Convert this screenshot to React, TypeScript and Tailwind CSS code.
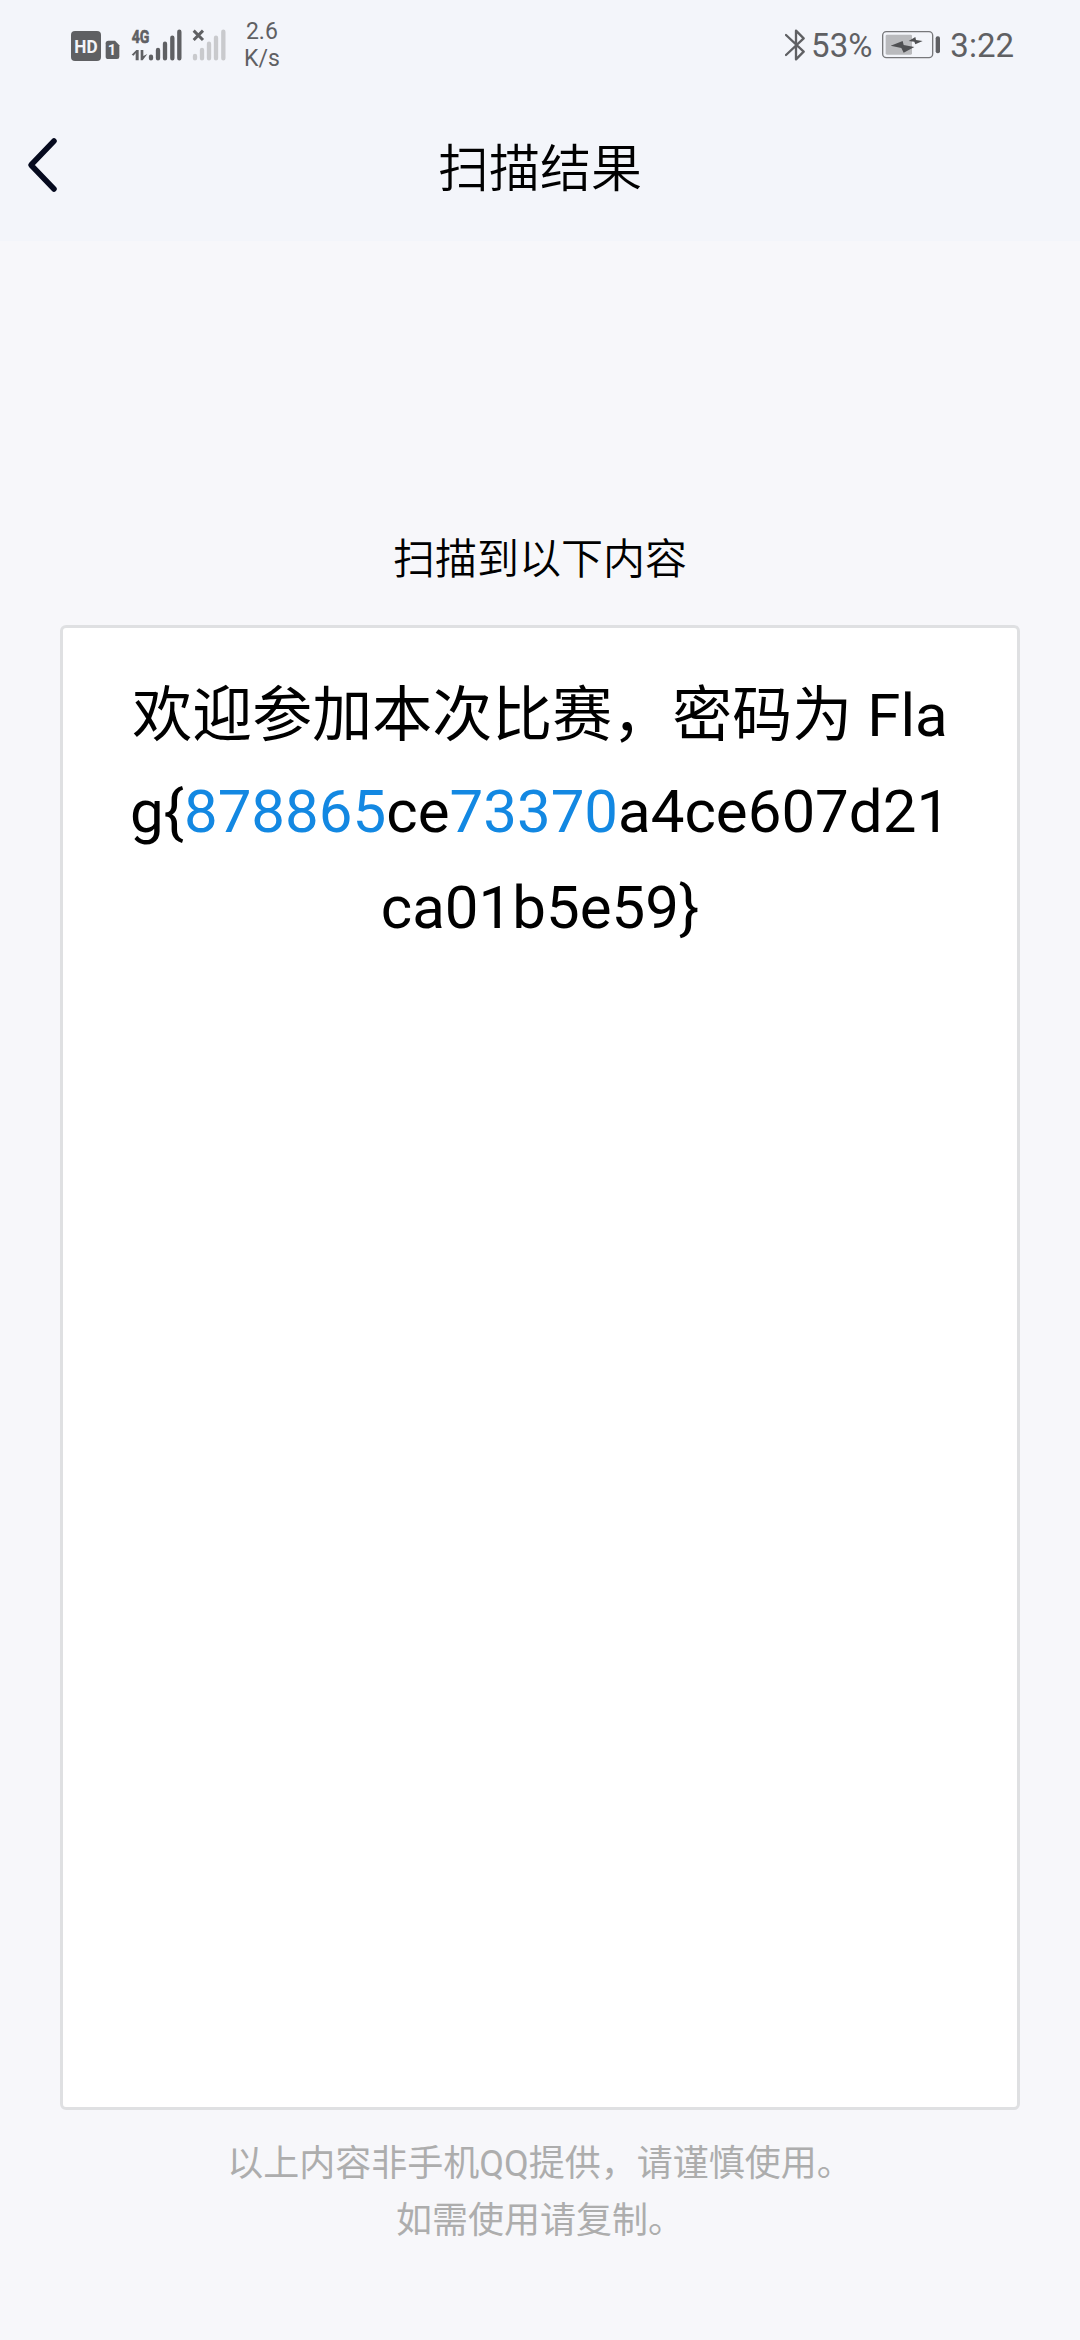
const INK = "#5f6063";

function HdSimIcon() {
  return (
    <svg className="h-8 w-[49px]" viewBox="33 57 147 96">
      <rect x="33" y="63" width="90" height="90" rx="12" fill={INK} />
      <text x="78" y="128" textAnchor="middle" textLength="70" lengthAdjust="spacingAndGlyphs" fontSize="56" fontWeight="700" fontFamily="Roboto, sans-serif" fill="#f3f4f9">HD</text>
      <path d="M145 92h20l13 14v34q0 7-7 7h-26q-8 0-8-7v-40q0-8 8-8z" fill={INK} />
      <text x="156" y="136" textAnchor="middle" fontSize="44" fontWeight="700" fontFamily="Roboto, sans-serif" fill="#f3f4f9">1</text>
    </svg>
  );
}

function SignalIcon() {
  return (
    <svg className="ml-[11px] h-8 w-[51px]" viewBox="213 57 153 96">
      <text x="215" y="99" textLength="53" lengthAdjust="spacingAndGlyphs" fontSize="54" fontWeight="700" fontFamily="Roboto, sans-serif" fill={INK} stroke={INK} strokeWidth="2">4G</text>
      <path d="M215 134l14-14h7v31h-9v-22l-6 8zM242 120h8v18l12-6-14 19h-6z" fill={INK} />
      <g stroke={INK} strokeWidth="13" strokeLinecap="round">
        <path d="M273 140v5M294 120v25M315 101v44M337 83v62M358 65v80" />
      </g>
    </svg>
  );
}

function NoSignalIcon() {
  return (
    <svg className="ml-[10px] h-8 w-[34px]" viewBox="396 57 102 96">
      <path d="M401 62l28 28M429 62l-28 28" stroke={INK} strokeWidth="9" />
      <g stroke="#c9cacd" strokeWidth="13" strokeLinecap="round">
        <path d="M405 138v7M426 120v25M447 101v44M468 83v62M490 65v80" />
      </g>
    </svg>
  );
}

function BluetoothIcon() {
  return (
    <svg className="h-8 w-5" viewBox="70 57 60 96" fill="none">
      <path d="M73 75l53 50-23 23V62l23 23-53 50" stroke={INK} strokeWidth="7" strokeLinejoin="round" strokeLinecap="round" />
    </svg>
  );
}

function BatteryIcon() {
  return (
    <svg className="h-7 w-[58px]" viewBox="363 65 174 84">
      <rect x="365" y="67" width="150" height="78" rx="11" fill="none" stroke="#77787b" strokeWidth="4" />
      <rect x="374" y="76" width="79" height="60" rx="4" fill="#b9babd" />
      <path d="M389 109l36-14 3 12 32 6-32 17-7-14zM443 95l20-12 2 9 20 3-22 10-3-8z" fill="#4f5053" />
      <rect x="524" y="81" width="13" height="51" rx="6" fill={INK} />
    </svg>
  );
}

export default function App() {
  return (
    <div className="flex h-[2340px] w-[1080px] flex-col overflow-hidden bg-[#f7f7fa] font-['Roboto','Noto_Sans_CJK_SC',sans-serif] text-black">
      <header className="h-[241px] bg-[#f3f5fa]">
        <div className="flex h-[90px] items-center justify-between pr-[66px] pl-[71px] text-[#5f6063]">
          <div className="flex items-center">
            <HdSimIcon />
            <SignalIcon />
            <NoSignalIcon />
            <div className="ml-[18px] flex flex-col text-center text-[23px] leading-[27px]">
              <span>2.6</span>
              <span>K/s</span>
            </div>
          </div>
          <div className="flex items-center text-[33px] leading-[40px]">
            <BluetoothIcon />
            <span className="ml-[6px] pt-0.5">53%</span>
            <span className="ml-[10px]"><BatteryIcon /></span>
            <span className="ml-[10px] pt-0.5">3:22</span>
          </div>
        </div>
        <div className="grid h-[151px] grid-cols-[120px_1fr_120px]">
          <button className="flex items-start pt-[47px] pl-[27px]" aria-label="返回">
            <svg className="h-[56px] w-[32px]" viewBox="0 0 32 56" fill="none">
              <path d="M27 4L4 28l23 24" stroke="#050a1e" strokeWidth="5.5" strokeLinecap="round" strokeLinejoin="round" />
            </svg>
          </button>
          <h1 className="pt-[42px] text-center text-[51px] leading-[76px] font-[350]">扫描结果</h1>
        </div>
      </header>
      <main className="flex flex-col px-[60px]">
        <h2 className="mt-[289px] text-center text-[42px] leading-[60px] font-[350]">扫描到以下内容</h2>
        <section className="mt-[35px] h-[1485px] rounded-md border-[3px] border-[#dfe0e2] bg-white pt-[40px] text-center text-[60px] leading-[96px]">
          <p>欢迎参加本次比赛，密码为 Fla</p>
          <p>
            g{"{"}<span className="text-[#1388e2]">878865</span>ce<span className="text-[#1388e2]">73370</span>a4ce607d21
          </p>
          <p>ca01b5e59{"}"}</p>
        </section>
        <footer className="mt-[26px] text-center text-[36px] leading-[57px] text-[#adadad]">
          <p>以上内容非手机QQ提供，请谨慎使用。</p>
          <p>如需使用请复制。</p>
        </footer>
      </main>
    </div>
  );
}
